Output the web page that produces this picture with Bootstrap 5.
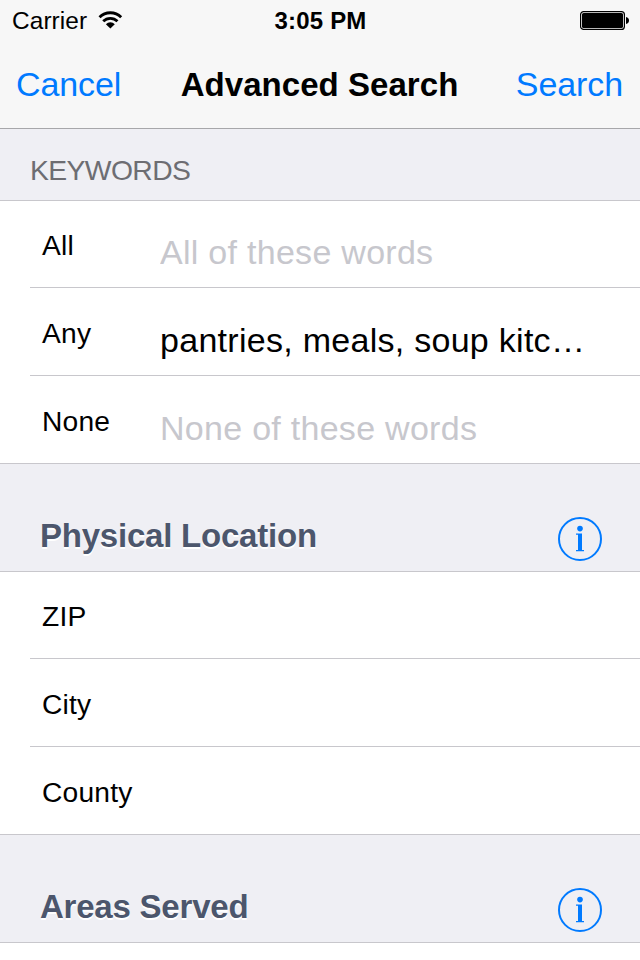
<!DOCTYPE html>
<html lang="en">
<head>
<meta charset="utf-8">
<meta name="viewport" content="width=device-width, initial-scale=1">
<title>Advanced Search</title>
<link rel="stylesheet" href="https://cdn.jsdelivr.net/npm/bootstrap@5.3.0/dist/css/bootstrap.min.css">
<style>
  body { font-family: "Liberation Sans", Arial, sans-serif; line-height: 40px; color: #000; background: #efeff4; }
  .top-area { background: #f7f7f7; border-bottom: 1px solid #a7a7aa; height: 129px; }
  .status-line { height: 40px; font-size: 24.4px; padding: 1px 11px 0 12px; }
  .status-line svg { display: block; }
  .carrier { letter-spacing: .1px; }
  .wifi { margin: 9px 0 0 11px; }
  .battery { margin-top: 10px; }
  .clock { font-size: 24px; letter-spacing: .2px; }
  .title-line { height: 88px; padding: 24px 17px 0 16px; font-size: 34px; }
  .title-line a { color: #007aff; text-decoration: none; letter-spacing: -.1px; }
  .title-text { font-size: 33px; line-height: 41px; letter-spacing: .05px; }
  .side { flex: 1 0 0; }
  .plain-head { height: 71px; padding: 21px 30px 0; color: #6d6d72; font-size: 28.3px; letter-spacing: -.6px; }
  .form-list { background: #fff; border-top: 1px solid #c8c7cc; border-bottom: 1px solid #c8c7cc; }
  .form-line { height: 88px; margin-left: 30px; padding-left: 12px; border-top: 1px solid #c8c7cc; }
  .form-line:first-child { height: 86px; border-top: 0; }
  .form-line label { width: 118px; padding-bottom: 22px; font-size: 28.2px; letter-spacing: .2px; }
  .form-line input { width: 430px; height: 40px; margin-bottom: 15px; padding: 0; border: 0; border-radius: 0; background: transparent; color: #000; font-size: 34px; line-height: 40px; letter-spacing: .28px; outline: 0; text-overflow: ellipsis; }
  .form-line input::placeholder { color: #c7c7cd; opacity: 1; }
  .bold-head { height: 107px; padding: 0 38px 0 40px; }
  .bold-head h2 { margin: 0 0 15px; color: #4c566c; font-size: 33px; line-height: 41px; letter-spacing: -.22px; text-shadow: 0 2px 0 #fff; }
  .info-btn { margin-bottom: 10px; line-height: 0; color: #007aff; }
  .next-list { height: 18px; border-bottom: 0; }
</style>
<script src="https://cdn.jsdelivr.net/npm/bootstrap@5.3.0/dist/js/bootstrap.bundle.min.js"></script>
</head>
<body>
<header class="top-area">
  <div class="status-line d-flex align-items-start">
    <div class="side d-flex">
      <span class="carrier">Carrier</span>
      <svg class="wifi" width="24.7" height="19" viewBox="0 0 26 20" fill="none" stroke="#000">
        <path d="M1.600 7.600a16.200 16.200 0 0 1 22.800 0" stroke-width="3"/>
        <path d="M5.500 11.800a10.600 10.600 0 0 1 15 0" stroke-width="2.900"/>
        <path d="M13 19.600l-4.700-4.700a6.600 6.600 0 0 1 9.400 0z" fill="#000" stroke="none"/>
      </svg>
    </div>
    <span class="clock fw-bold">3:05 PM</span>
    <div class="side d-flex justify-content-end">
      <svg class="battery" width="49" height="19" viewBox="0 0 49 19">
        <rect x=".6" y=".6" width="43.8" height="17.8" rx="3" fill="none" stroke="#000" stroke-width="1.2"/>
        <rect x="2" y="2" width="41" height="15" rx="1.6"/>
        <path d="M46 6c2 .3 3 1.600 3 3.500s-1 3.200-3 3.500z"/>
      </svg>
    </div>
  </div>
  <nav class="title-line d-flex align-items-start">
    <div class="side"><a href="#">Cancel</a></div>
    <h1 class="title-text fw-bold m-0">Advanced Search</h1>
    <div class="side text-end"><a href="#">Search</a></div>
  </nav>
</header>
<main>
  <div class="plain-head">KEYWORDS</div>
  <div class="form-list">
    <div class="form-line d-flex align-items-end"><label for="all">All</label><input id="all" placeholder="All of these words"></div>
    <div class="form-line d-flex align-items-end"><label for="any">Any</label><input id="any" value="pantries, meals, soup kitchens"></div>
    <div class="form-line d-flex align-items-end"><label for="none">None</label><input id="none" placeholder="None of these words"></div>
  </div>
  <div class="bold-head d-flex align-items-end justify-content-between">
    <h2 class="fw-bold">Physical Location</h2>
    <button class="info-btn btn p-0 border-0" aria-label="Info">
      <svg width="44" height="44" viewBox="0 0 44 44" fill="currentColor"><circle cx="22" cy="22" r="21" fill="none" stroke="currentColor" stroke-width="2"/><circle cx="22" cy="11.600" r="2.800"/><path d="M18 16.400h6V33h2v1.300h-8V33h2V17.700h-2z"/></svg>
    </button>
  </div>
  <div class="form-list">
    <div class="form-line d-flex align-items-end"><label for="zip">ZIP</label><input id="zip"></div>
    <div class="form-line d-flex align-items-end"><label for="city">City</label><input id="city"></div>
    <div class="form-line d-flex align-items-end"><label for="county">County</label><input id="county"></div>
  </div>
  <div class="bold-head d-flex align-items-end justify-content-between">
    <h2 class="fw-bold">Areas Served</h2>
    <button class="info-btn btn p-0 border-0" aria-label="Info">
      <svg width="44" height="44" viewBox="0 0 44 44" fill="currentColor"><circle cx="22" cy="22" r="21" fill="none" stroke="currentColor" stroke-width="2"/><circle cx="22" cy="11.600" r="2.800"/><path d="M18 16.400h6V33h2v1.300h-8V33h2V17.700h-2z"/></svg>
    </button>
  </div>
  <div class="form-list next-list"></div>
</main>
</body>
</html>
